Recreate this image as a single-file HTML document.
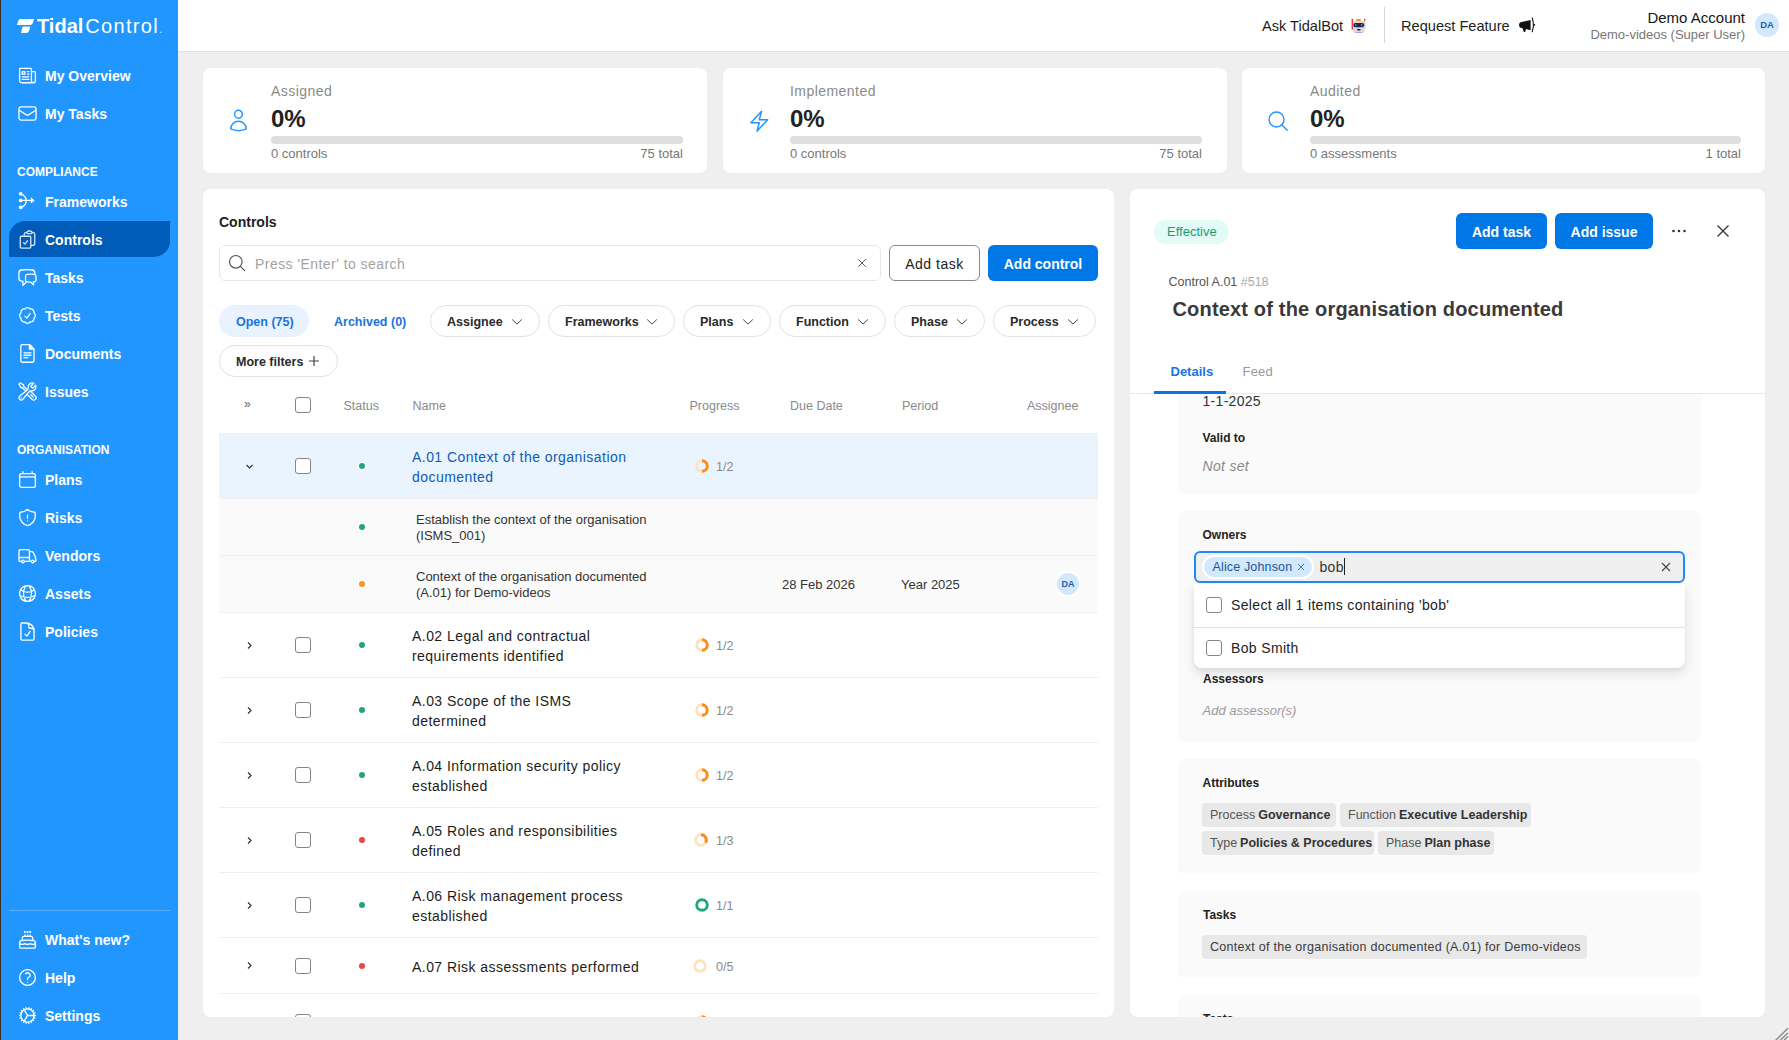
<!DOCTYPE html>
<html><head><meta charset="utf-8">
<style>
*{box-sizing:border-box;margin:0;padding:0}
html,body{width:1789px;height:1040px;overflow:hidden}
body{font-family:"Liberation Sans",sans-serif;background:#efefef;color:#222;position:relative}
.abs{position:absolute}
#side{position:absolute;left:0;top:0;width:178px;height:1040px;background:#2196ff;color:#fff}
#side .edge{position:absolute;left:0;top:0;width:1px;height:1040px;background:#3a2a22}
.logo{color:#fff;white-space:nowrap;line-height:24px}
.logo b{font-size:20px;font-weight:bold;letter-spacing:0}
.logo span{font-size:20px;letter-spacing:1.3px;margin-left:2px}
.logo i{font-style:normal;font-size:12px;opacity:.7}
.nav{position:absolute;left:45px;height:20px;line-height:20px;font-size:14px;font-weight:bold;white-space:nowrap}
.nav svg{position:absolute;left:-28.5px;top:-1.5px;width:21px;height:21px;fill:none;stroke:#fff;stroke-width:1.5;stroke-linecap:round;stroke-linejoin:round}
.nav svg.ci{stroke:#d5e4f3}
.sec{position:absolute;left:17px;height:20px;line-height:20px;font-size:12px;font-weight:bold}
.act{position:absolute;left:9px;top:221px;width:161px;height:36px;background:#005cb8;border-radius:16px 0 16px 0}
#hdr{position:absolute;left:178px;top:0;width:1611px;height:52px;background:#fff;border-bottom:1px solid #e0e0e0}
.card{position:absolute;background:#fff;border-radius:8px}
.htxt{font-size:14.6px;line-height:20px;color:#1e1e1e;white-space:nowrap}
.sic{fill:none;stroke:#2196ff;stroke-width:1.4;stroke-linecap:round;stroke-linejoin:round}
.stat{position:absolute;top:81px}
.st{height:20px;line-height:20px;font-size:14px;letter-spacing:.45px;color:#8a8a8a}
.sv{height:28px;line-height:28px;font-size:24px;font-weight:bold;color:#222;margin-top:4px}
.sb{height:8px;border-radius:4px;background:#dedede;margin-top:3px}
.sf{display:flex;justify-content:space-between;font-size:13px;line-height:16px;color:#777;margin-top:2px}
.btnw{border:1px solid #8a8a8a;border-radius:6px;background:#fff;font-size:14px;letter-spacing:.5px;line-height:34px;padding-top:1px;text-align:center;color:#222}
.btnb{border-radius:6px;background:#0077e6;font-size:14px;font-weight:bold;line-height:34px;padding-top:2px;text-align:center;color:#fff}
.pill{height:32px;border-radius:16px;font-size:12.5px;font-weight:bold;line-height:32px;padding-top:1px;padding-left:17px;white-space:nowrap}
.psel{background:#e8f3ff;color:#1a73d9}
.plink{color:#1a73d9;padding-left:16px}
.pdd{border:1px solid #e3e3e3;color:#2a2a2a;line-height:30px;padding-top:1px;padding-left:16px}
.chev{position:absolute;top:12px}
.cb{width:16px;height:16px;border:1.2px solid #858585;border-radius:3px;background:#fff}
.th{font-size:12.5px;line-height:18px;color:#8a8a8a;white-space:nowrap}
.dot{width:6px;height:6px;border-radius:3px;box-shadow:0 0 0 1.5px #fff}
.rname{font-size:14px;letter-spacing:.45px;line-height:20px;color:#1c1c1c;white-space:nowrap}
.sname{font-size:13px;line-height:16px;color:#333;white-space:nowrap}
.prg{font-size:12.5px;line-height:18px;color:#8a8a8a}
.av{width:26px;height:26px;border-radius:13px;background:#d3e8fc;border:2px solid #fff;color:#1f5fa8;font-size:9px;font-weight:bold;line-height:22px;text-align:center}
.pbox{background:#fafafa;border-radius:8px}
.ptxt{font-size:14px;letter-spacing:.3px;line-height:20px;color:#333;white-space:nowrap}
.plab{font-size:12px;font-weight:bold;line-height:18px;color:#222;white-space:nowrap}
.pit{font-size:14px;font-style:italic;letter-spacing:.3px;line-height:20px;color:#8a8a8a}
.pit2{font-size:13px;font-style:italic;line-height:20px;color:#9a9a9a;white-space:nowrap}
.chip{height:20px;width:108px;border-radius:10px;background:#d2e8fd;box-shadow:0 0 0 2px #fff;color:#1b5597;font-size:12.5px;letter-spacing:.15px;line-height:20px;padding-left:9px;white-space:nowrap}
.dtxt{font-size:14px;letter-spacing:.35px;line-height:20px;color:#222;white-space:nowrap}
.tag{height:23.5px;border-radius:4px;background:#e8e8e8;color:#555;font-size:12.5px;line-height:23.5px;padding-top:1px;padding-left:8px;white-space:nowrap}
.tag b{color:#333;margin-left:3px}

</style></head>
<body>
<div id="side"><div class="edge"></div>
<svg class="abs" style="left:16px;top:18px" width="19" height="16" viewBox="0 0 19 16"><path d="M4.5 1H18L17 4.5C16.3 6.5 15.3 7 13.5 7H1L2 3.6C2.6 1.7 3.2 1 4.5 1Z M7.3 8.5H14.2L13.5 11.5C12.8 14 12 15 10 15H5L5.7 12C6.2 9.5 6.5 8.5 7.3 8.5Z" fill="#fff"/></svg>
<div class="abs logo" style="left:37px;top:14px"><b>Tidal</b><span>Control</span><i>.</i></div>
<div class="nav" style="top:66px"><svg viewBox="0 0 24 24"><path d="M12 7.5h1.5m-1.5 3h1.5m-7.5 3h7.5m-7.5 3h7.5m3-9h3.375c.621 0 1.125.504 1.125 1.125V18a2.25 2.25 0 0 1-2.25 2.25M16.5 7.5V18a2.25 2.25 0 0 0 2.25 2.25M16.5 7.5V4.875c0-.621-.504-1.125-1.125-1.125H4.125C3.504 3.75 3 4.254 3 4.875V18a2.25 2.25 0 0 0 2.25 2.25h13.5M6 7.5h3v3H6v-3Z"/></svg>My Overview</div>
<div class="nav" style="top:104px"><svg viewBox="0 0 24 24"><path d="M21.75 6.75v10.5a2.25 2.25 0 0 1-2.25 2.25h-15a2.25 2.25 0 0 1-2.25-2.25V6.75m19.5 0A2.25 2.25 0 0 0 19.5 4.5h-15a2.25 2.25 0 0 0-2.25 2.25m19.5 0v.243a2.25 2.25 0 0 1-1.07 1.916l-7.5 4.615a2.25 2.25 0 0 1-2.36 0L3.32 8.91a2.25 2.25 0 0 1-1.07-1.916V6.75"/></svg>My Tasks</div>
<div class="sec" style="top:161.5px">COMPLIANCE</div>
<div class="nav" style="top:192px"><svg viewBox="0 0 24 24"><circle cx="4.2" cy="3.2" r="2.1" fill="#fff" stroke="none"/><circle cx="4.2" cy="10.8" r="2.1" fill="#fff" stroke="none"/><circle cx="4.2" cy="18.8" r="2.1" fill="#fff" stroke="none"/><path d="M4.2 3.2C9 5 10.6 8 10.6 11S9 17 4.2 18.8M4.2 10.8H16.5"/><path d="M15.8 7.2L20.2 10.8L15.8 14.4Z" fill="#fff" stroke="none"/></svg>Frameworks</div>
<div class="act"></div>
<div class="nav" style="top:230px"><svg viewBox="0 0 24 24" class=ci><path d="M11.35 3.836c-.065.21-.1.433-.1.664 0 .414.336.75.75.75h4.5a.75.75 0 0 0 .75-.75 2.25 2.25 0 0 0-.1-.664m-5.8 0A2.251 2.251 0 0 1 13.5 2.25H15c1.012 0 1.867.668 2.15 1.586m-5.8 0c-.376.023-.75.05-1.124.08C9.095 4.01 8.25 4.973 8.25 6.108V8.25m8.9-4.414c.376.023.75.05 1.124.08 1.131.094 1.976 1.057 1.976 2.192V16.5A2.25 2.25 0 0 1 18 18.75h-2.25m-7.5-10.5H4.875c-.621 0-1.125.504-1.125 1.125v11.25c0 .621.504 1.125 1.125 1.125h9.75c.621 0 1.125-.504 1.125-1.125V18.75m-7.5-10.5h6.375c.621 0 1.125.504 1.125 1.125v9.375m-8.25-3 1.5 1.5 3-3.75"/></svg>Controls</div>
<div class="nav" style="top:268px"><svg viewBox="0 0 24 24"><path d="M20.25 8.511c.884.284 1.5 1.128 1.5 2.097v4.286c0 1.136-.847 2.1-1.98 2.193-.34.027-.68.052-1.02.072v3.091l-3-3c-1.354 0-2.694-.055-4.02-.163a2.115 2.115 0 0 1-.825-.242m9.345-8.334a2.126 2.126 0 0 0-.476-.095 48.64 48.64 0 0 0-8.048 0c-1.131.094-1.976 1.057-1.976 2.192v4.286c0 .837.46 1.58 1.155 1.951m9.345-8.334V6.637c0-1.621-1.152-3.026-2.76-3.235A48.455 48.455 0 0 0 11.25 3c-2.115 0-4.198.137-6.24.402-1.608.209-2.76 1.614-2.76 3.235v6.226c0 1.621 1.152 3.026 2.76 3.235.577.075 1.157.14 1.74.194V21l4.155-4.155"/></svg>Tasks</div>
<div class="nav" style="top:306px"><svg viewBox="0 0 24 24"><path d="M9 12.75 11.25 15 15 9.75M21 12c0 1.268-.63 2.39-1.593 3.068a3.745 3.745 0 0 1-1.043 3.296 3.745 3.745 0 0 1-3.296 1.043A3.745 3.745 0 0 1 12 21c-1.268 0-2.39-.63-3.068-1.593a3.746 3.746 0 0 1-3.296-1.043 3.745 3.745 0 0 1-1.043-3.296A3.745 3.745 0 0 1 3 12c0-1.268.63-2.39 1.593-3.068a3.745 3.745 0 0 1 1.043-3.296 3.746 3.746 0 0 1 3.296-1.043A3.746 3.746 0 0 1 12 3c1.268 0 2.39.63 3.068 1.593a3.746 3.746 0 0 1 3.296 1.043 3.746 3.746 0 0 1 1.043 3.296A3.745 3.745 0 0 1 21 12Z"/></svg>Tests</div>
<div class="nav" style="top:344px"><svg viewBox="0 0 24 24"><path d="M6 1.8h8.2l5.2 5.2v13.4a1.6 1.6 0 0 1-1.6 1.6H6a1.6 1.6 0 0 1-1.6-1.6V3.4A1.6 1.6 0 0 1 6 1.8Z"/><path d="M14.2 1.8V7h5.2Z" fill="#fff"/><path d="M8 11.2h8M8 14h8M8 16.8h4.5"/></svg>Documents</div>
<div class="nav" style="top:382px"><svg viewBox="0 0 24 24"><path d="M11.42 15.17 17.25 21A2.652 2.652 0 0 0 21 17.25l-5.877-5.877M11.42 15.17l2.496-3.03c.317-.384.74-.626 1.208-.766M11.42 15.17l-4.655 5.653a2.548 2.548 0 1 1-3.586-3.586l6.837-5.63m5.108-.233c.55-.164 1.163-.188 1.743-.14a4.5 4.5 0 0 0 4.486-6.336l-3.276 3.277a3.004 3.004 0 0 1-2.25-2.25l3.276-3.276a4.5 4.5 0 0 0-6.336 4.486c.091 1.076-.071 2.264-.904 2.95l-.102.085m-1.745 1.437L5.909 7.5H4.5L2.25 3.75l1.5-1.5L7.5 4.5v1.409l4.26 4.26m-1.745 1.437 1.745-1.437m6.615 8.206L15.75 15.75M4.867 19.125h.008v.008h-.008v-.008Z"/></svg>Issues</div>
<div class="sec" style="top:439.5px">ORGANISATION</div>
<div class="nav" style="top:470px"><svg viewBox="0 0 24 24"><path d="M6.75 3v2.25M17.25 3v2.25M3 18.75V7.5a2.25 2.25 0 0 1 2.25-2.25h13.5A2.25 2.25 0 0 1 21 7.5v11.25m-18 0A2.25 2.25 0 0 0 5.25 21h13.5A2.25 2.25 0 0 0 21 18.75m-18 0v-7.5A2.25 2.25 0 0 1 5.25 9h13.5A2.25 2.25 0 0 1 21 11.25v7.5"/></svg>Plans</div>
<div class="nav" style="top:508px"><svg viewBox="0 0 24 24"><path d="M12 9v3.75m0-10.036A11.959 11.959 0 0 1 3.598 6 11.99 11.99 0 0 0 3 9.75c0 5.592 3.824 10.29 9 11.622 5.176-1.332 9-6.03 9-11.622 0-1.310-.21-2.57-.598-3.75h-.152c-3.196 0-6.1-1.25-8.25-3.286Zm0 13.036h.008v.008H12v-.008Z"/></svg>Risks</div>
<div class="nav" style="top:546px"><svg viewBox="0 0 24 24"><path d="M8.25 18.75a1.5 1.5 0 0 1-3 0m3 0a1.5 1.5 0 0 0-3 0m3 0h6m-9 0H3.375a1.125 1.125 0 0 1-1.125-1.125V14.25m17.25 4.5a1.5 1.5 0 0 1-3 0m3 0a1.5 1.5 0 0 0-3 0m3 0h1.125c.621 0 1.129-.504 1.090-1.124a17.902 17.902 0 0 0-3.213-9.193 2.056 2.056 0 0 0-1.58-.86H14.25M16.5 18.75h-2.25m0-11.177v-.958c0-.568-.422-1.048-.987-1.106a48.554 48.554 0 0 0-10.026 0 1.106 1.106 0 0 0-.987 1.106v7.635m12-6.677v6.677m0 4.5v-4.5m0 0h-12"/></svg>Vendors</div>
<div class="nav" style="top:584px"><svg viewBox="0 0 24 24"><path d="M12 21a9.004 9.004 0 0 0 8.716-6.747M12 21a9.004 9.004 0 0 1-8.716-6.747M12 21c2.485 0 4.5-4.03 4.5-9S14.485 3 12 3m0 18c-2.485 0-4.5-4.03-4.5-9S9.515 3 12 3m0 0a8.997 8.997 0 0 1 7.843 4.582M12 3a8.997 8.997 0 0 0-7.843 4.582m15.686 0A11.953 11.953 0 0 1 12 10.5c-2.998 0-5.74-1.1-7.843-2.918m15.686 0A8.959 8.959 0 0 1 21 12c0 .778-.099 1.533-.284 2.253m0 0A17.919 17.919 0 0 1 12 16.5c-3.162 0-6.133-.815-8.716-2.247m0 0A9.015 9.015 0 0 1 3 12c0-1.605.42-3.113 1.157-4.418"/></svg>Assets</div>
<div class="nav" style="top:622px"><svg viewBox="0 0 24 24"><path d="M10.125 2.25h-4.5c-.621 0-1.125.504-1.125 1.125v17.25c0 .621.504 1.125 1.125 1.125h12.75c.621 0 1.125-.504 1.125-1.125v-9M10.125 2.25h.375a9 9 0 0 1 9 9v.375M10.125 2.25A3.375 3.375 0 0 1 13.5 5.625v1.5c0 .621.504 1.125 1.125 1.125h1.5a3.375 3.375 0 0 1 3.375 3.375M9 15l2.25 2.25L15 12"/></svg>Policies</div>
<div class="nav" style="top:930px"><svg viewBox="0 0 24 24"><path d="M12 8.25v-1.5m0 1.5c-1.355 0-2.697.056-4.024.166C6.845 8.51 6 9.473 6 10.608v2.513m6-4.871c1.355 0 2.697.056 4.024.166C17.155 8.51 18 9.473 18 10.608v2.513M15 8.25v-1.5m-6 1.5v-1.5m12 9.75-1.5.75a3.354 3.354 0 0 1-3 0 3.354 3.354 0 0 0-3 0 3.354 3.354 0 0 1-3 0 3.354 3.354 0 0 0-3 0 3.354 3.354 0 0 1-3 0L3 16.5m15-3.379a48.474 48.474 0 0 0-6-.371c-2.032 0-4.034.126-6 .371m12 0c.39.049.777.102 1.163.16 1.070.16 1.837 1.094 1.837 2.175v5.169c0 .621-.504 1.125-1.125 1.125H4.125A1.125 1.125 0 0 1 3 20.625v-5.17c0-1.080.768-2.014 1.837-2.174A47.78 47.78 0 0 1 6 13.12M12.265 3.11a.375.375 0 1 1-.53 0L12 2.845l.265.265Zm-3 0a.375.375 0 1 1-.53 0L9 2.845l.265.265Zm6 0a.375.375 0 1 1-.53 0L15 2.845l.265.265Z"/></svg>What's new?</div>
<div class="nav" style="top:968px"><svg viewBox="0 0 24 24"><path d="M9.879 7.519c1.171-1.025 3.071-1.025 4.242 0 1.172 1.025 1.172 2.687 0 3.712-.203.179-.43.326-.67.442-.745.361-1.450.999-1.450 1.827v.75M21 12a9 9 0 1 1-18 0 9 9 0 0 1 18 0Zm-9 5.25h.008v.008H12v-.008Z"/></svg>Help</div>
<div class="nav" style="top:1006px"><svg viewBox="0 0 24 24"><path d="M4.5 12a7.5 7.5 0 0 0 15 0m-15 0a7.5 7.5 0 1 1 15 0m-15 0H3m16.5 0H21m-1.5 0H12m-8.457 3.077 1.41-.513m14.095-5.13 1.41-.513M5.106 17.785l1.15-.964m11.49-9.642 1.149-.964M7.501 19.795l.75-1.3m7.5-12.99.75-1.3m-6.063 16.658.26-1.477m2.605-14.772.26-1.477m0 17.726-.26-1.477M10.698 4.614l-.26-1.477M16.5 19.794l-.75-1.299M7.5 4.205 12 12m6.894 5.785-1.149-.964M6.256 7.178l-1.15-.964m15.352 8.864-1.410-.513M4.954 9.435l-1.41-.514M12.002 12l-3.75 6.495"/></svg>Settings</div>
<div class="abs" style="left:9px;top:910px;width:161px;height:1px;background:rgba(255,255,255,.25)"></div>
</div>
<div id="hdr"></div>
<div class="abs htxt" style="left:1262px;top:16px">Ask TidalBot</div>
<svg class="abs" style="left:1345px;top:12px" width="30" height="26" viewBox="0 0 30 26"><rect x="6.6" y="6.8" width="1.5" height="11" rx=".7" fill="#e8384a"/><rect x="18.9" y="6.8" width="1.5" height="10" rx=".7" fill="#dcc49a"/><rect x="18.9" y="6.8" width="1.5" height="1.8" rx=".7" fill="#e8384a"/><rect x="11" y="7" width="5" height="2" rx="1" fill="#f7931e"/><rect x="8" y="9" width="11.5" height="12" rx="2" fill="#dadada"/><rect x="8.4" y="11" width="10.7" height="4.3" rx="2" fill="#23234a"/><ellipse cx="10.8" cy="13.1" rx=".9" ry="1.1" fill="#3a86e8"/><ellipse cx="16.6" cy="13.1" rx=".9" ry="1.1" fill="#19a0f5"/><rect x="12" y="17" width="3.6" height="1.6" rx=".8" fill="#1d1d6b"/><rect x="10.5" y="20" width="6.5" height="1" fill="#a3a3ff"/></svg>
<div class="abs" style="left:1384px;top:7px;width:1px;height:36px;background:#d6d6d6"></div>
<div class="abs htxt" style="left:1401px;top:16px">Request Feature</div>
<svg class="abs" style="left:1512px;top:12px" width="30" height="26" viewBox="0 0 30 26"><path d="M8.5 10.3Q7 10.8 7 13Q7 15.2 8.5 15.7L18.6 18.2V8Z" fill="#111"/><path d="M10.3 15.2L11.6 19.6Q12.4 20.6 13.3 19.6L14.2 16.2Z" fill="#111"/><path d="M20.2 6Q22.6 12.8 20.2 19.8" fill="none" stroke="#111" stroke-width="1.1" stroke-linecap="round"/><circle cx="22.3" cy="12.8" r=".9" fill="#111"/></svg>
<div class="abs" style="left:1545px;top:9px;width:200px;text-align:right;font-size:15px;line-height:18px;color:#151515">Demo Account</div>
<div class="abs" style="left:1545px;top:27px;width:200px;text-align:right;font-size:13px;line-height:16px;color:#777">Demo-videos (Super User)</div>
<div class="abs" style="left:1755px;top:13px;width:24px;height:24px;border-radius:12px;background:#d3e8fc;color:#1f5fa8;font-size:9.5px;font-weight:bold;line-height:24px;text-align:center">DA</div>
<div class="card" style="left:203px;top:68px;width:504px;height:105px"></div>
<div class="card" style="left:723px;top:68px;width:504px;height:105px"></div>
<div class="card" style="left:1242px;top:68px;width:523px;height:105px"></div>
<svg class="abs sic" style="left:226px;top:108px" width="25" height="25" viewBox="0 0 24 24"><path d="M15.75 6a3.75 3.75 0 11-7.5 0 3.75 3.75 0 017.5 0zM4.501 20.118a7.5 7.5 0 0114.998 0A17.933 17.933 0 0112 21.75c-2.676 0-5.216-.584-7.499-1.632z"/></svg>
<svg class="abs sic" style="left:746.5px;top:108.5px" width="24.5" height="24.5" viewBox="0 0 24 24"><path d="M3.75 13.5l10.5-11.25L12 10.5h8.25L9.75 21.75 12 13.5H3.75z"/></svg>
<svg class="abs sic" style="left:1266px;top:109px" width="24" height="24" viewBox="0 0 24 24"><circle cx="10.5" cy="10.5" r="7.5"/><path d="M16 16l5.2 5.2"/></svg>
<div class="stat" style="left:271px;width:412px"><div class="st">Assigned</div><div class="sv">0%</div><div class="sb"></div><div class="sf"><span>0 controls</span><span>75 total</span></div></div>
<div class="stat" style="left:790px;width:412px"><div class="st">Implemented</div><div class="sv">0%</div><div class="sb"></div><div class="sf"><span>0 controls</span><span>75 total</span></div></div>
<div class="stat" style="left:1310px;width:431px"><div class="st">Audited</div><div class="sv">0%</div><div class="sb"></div><div class="sf"><span>0 assessments</span><span>1 total</span></div></div>
<div class="card" style="left:203px;top:189px;width:911px;height:828px;overflow:hidden">
<div class="abs" style="left:16px;top:23px;font-size:14px;font-weight:bold;line-height:20px;color:#1e1e1e">Controls</div>
<div class="abs" style="left:16px;top:56px;width:662px;height:36px;border:1px solid #e6e6e6;border-radius:6px"></div>
<svg class="abs" style="left:24px;top:64px" width="20" height="20" viewBox="0 0 20 20"><circle cx="8.8" cy="8.8" r="6.3" fill="none" stroke="#555" stroke-width="1.2"/><path d="M13.3 13.3l4.3 4.3" stroke="#555" stroke-width="1.2" stroke-linecap="round"/></svg>
<div class="abs" style="left:52px;top:65px;font-size:14px;letter-spacing:.45px;line-height:20px;color:#a3a3a3;white-space:nowrap">Press 'Enter' to search</div>
<svg class="abs" style="left:654px;top:69px" width="10" height="10" viewBox="0 0 10 10"><path d="M1.2 1.2l7.6 7.6M8.8 1.2l-7.6 7.6" stroke="#555" stroke-width=".95"/></svg>
<div class="abs btnw" style="left:686px;top:56px;width:91px;height:36px">Add task</div>
<div class="abs btnb" style="left:785px;top:56px;width:110px;height:36px">Add control</div>
<div class="abs pill psel" style="left:16px;top:116px;width:90px">Open (75)</div>
<div class="abs pill plink" style="left:115px;top:116px;width:103px">Archived (0)</div>
<div class="abs pill pdd" style="left:227px;top:116px;width:110px">Assignee<svg class="chev" style="left:80px" width="12" height="8" viewBox="0 0 12 8"><path d="M1.2 1.5l4.8 4.6l4.8 -4.6" fill="none" stroke="#444" stroke-width="1"/></svg></div>
<div class="abs pill pdd" style="left:345px;top:116px;width:127px">Frameworks<svg class="chev" style="left:97px" width="12" height="8" viewBox="0 0 12 8"><path d="M1.2 1.5l4.8 4.6l4.8 -4.6" fill="none" stroke="#444" stroke-width="1"/></svg></div>
<div class="abs pill pdd" style="left:480px;top:116px;width:88px">Plans<svg class="chev" style="left:58px" width="12" height="8" viewBox="0 0 12 8"><path d="M1.2 1.5l4.8 4.6l4.8 -4.6" fill="none" stroke="#444" stroke-width="1"/></svg></div>
<div class="abs pill pdd" style="left:576px;top:116px;width:107px">Function<svg class="chev" style="left:77px" width="12" height="8" viewBox="0 0 12 8"><path d="M1.2 1.5l4.8 4.6l4.8 -4.6" fill="none" stroke="#444" stroke-width="1"/></svg></div>
<div class="abs pill pdd" style="left:691px;top:116px;width:91px">Phase<svg class="chev" style="left:61px" width="12" height="8" viewBox="0 0 12 8"><path d="M1.2 1.5l4.8 4.6l4.8 -4.6" fill="none" stroke="#444" stroke-width="1"/></svg></div>
<div class="abs pill pdd" style="left:790px;top:116px;width:103px">Process<svg class="chev" style="left:73px" width="12" height="8" viewBox="0 0 12 8"><path d="M1.2 1.5l4.8 4.6l4.8 -4.6" fill="none" stroke="#444" stroke-width="1"/></svg></div>
<div class="abs pill pdd" style="left:16px;top:156px;width:119px">More filters<svg class="chev" style="left:88px;top:9px" width="12" height="12" viewBox="0 0 12 12"><path d="M6 1v10M1 6h10" fill="none" stroke="#444" stroke-width="1.2"/></svg></div>
<div class="abs" style="left:41px;top:207px;font-size:12px;line-height:16px;color:#666">&raquo;</div>
<div class="abs cb" style="left:92px;top:208px"></div>
<div class="abs th" style="left:140.5px;top:208px">Status</div>
<div class="abs th" style="left:209.5px;top:208px">Name</div>
<div class="abs th" style="left:486.5px;top:208px">Progress</div>
<div class="abs th" style="left:587px;top:208px">Due Date</div>
<div class="abs th" style="left:699px;top:208px">Period</div>
<div class="abs th" style="left:824px;top:208px">Assignee</div>
<div class="abs" style="left:16px;top:244px;width:879px;height:1px;background:#efefef"></div>
<div class="abs" style="left:16px;top:245px;width:879px;height:65px;background:#eaf4ff;border-bottom:1px solid #efefef"></div>
<svg class="abs" style="left:42px;top:274px" width="9" height="7" viewBox="0 0 9 7"><path d="M1.5 2l3 3l3 -3" fill="none" stroke="#333" stroke-width="1.2"/></svg>
<div class="abs cb" style="left:92px;top:269px"></div>
<div class="abs dot" style="left:156px;top:274px;background:#1fa67a"></div>
<div class="abs rname" style="left:209px;top:258px;color:#0f5bb5">A.01 Context of the organisation<br>documented</div>
<svg class="abs" style="left:491px;top:269px" width="16" height="16"><circle cx="8" cy="8" r="5.3" fill="none" stroke="#fde3bd" stroke-width="2.9"/><path d="M8 2.7 A5.3 5.3 0 0 1 8.00 13.30" fill="none" stroke="#fb8c1e" stroke-width="2.9"/></svg>
<div class="abs prg" style="left:513px;top:269px">1/2</div>
<div class="abs" style="left:16px;top:310px;width:879px;height:57px;background:#fafafa;border-bottom:1px solid #efefef"></div>
<div class="abs dot" style="left:156px;top:335px;background:#1fa67a"></div>
<div class="abs sname" style="left:213px;top:323px">Establish the context of the organisation<br>(ISMS_001)</div>
<div class="abs" style="left:16px;top:367px;width:879px;height:57px;background:#fafafa;border-bottom:1px solid #efefef"></div>
<div class="abs dot" style="left:156px;top:392px;background:#f7931e"></div>
<div class="abs sname" style="left:213px;top:380px">Context of the organisation documented<br>(A.01) for Demo-videos</div>
<div class="abs sname" style="left:579px;top:388px">28 Feb 2026</div>
<div class="abs sname" style="left:698px;top:388px">Year 2025</div>
<div class="abs av" style="left:852px;top:382px">DA</div>
<div class="abs" style="left:16px;top:488px;width:879px;height:1px;background:#efefef"></div>
<svg class="abs" style="left:43px;top:451.5px" width="7" height="9" viewBox="0 0 7 9"><path d="M2 1.5l3 3l-3 3" fill="none" stroke="#333" stroke-width="1.2"/></svg>
<div class="abs cb" style="left:92px;top:448.0px"></div>
<div class="abs dot" style="left:156px;top:453.0px;background:#1fa67a"></div>
<div class="abs rname" style="left:209px;top:437.0px">A.02 Legal and contractual<br>requirements identified</div>
<svg class="abs" style="left:491px;top:448.0px" width="16" height="16"><circle cx="8" cy="8" r="5.3" fill="none" stroke="#fde3bd" stroke-width="2.9"/><path d="M8 2.7 A5.3 5.3 0 0 1 8.00 13.30" fill="none" stroke="#fb8c1e" stroke-width="2.9"/></svg>
<div class="abs prg" style="left:513px;top:448.0px">1/2</div>
<div class="abs" style="left:16px;top:553px;width:879px;height:1px;background:#efefef"></div>
<svg class="abs" style="left:43px;top:516.5px" width="7" height="9" viewBox="0 0 7 9"><path d="M2 1.5l3 3l-3 3" fill="none" stroke="#333" stroke-width="1.2"/></svg>
<div class="abs cb" style="left:92px;top:513.0px"></div>
<div class="abs dot" style="left:156px;top:518.0px;background:#1fa67a"></div>
<div class="abs rname" style="left:209px;top:502.0px">A.03 Scope of the ISMS<br>determined</div>
<svg class="abs" style="left:491px;top:513.0px" width="16" height="16"><circle cx="8" cy="8" r="5.3" fill="none" stroke="#fde3bd" stroke-width="2.9"/><path d="M8 2.7 A5.3 5.3 0 0 1 8.00 13.30" fill="none" stroke="#fb8c1e" stroke-width="2.9"/></svg>
<div class="abs prg" style="left:513px;top:513.0px">1/2</div>
<div class="abs" style="left:16px;top:618px;width:879px;height:1px;background:#efefef"></div>
<svg class="abs" style="left:43px;top:581.5px" width="7" height="9" viewBox="0 0 7 9"><path d="M2 1.5l3 3l-3 3" fill="none" stroke="#333" stroke-width="1.2"/></svg>
<div class="abs cb" style="left:92px;top:578.0px"></div>
<div class="abs dot" style="left:156px;top:583.0px;background:#1fa67a"></div>
<div class="abs rname" style="left:209px;top:567.0px">A.04 Information security policy<br>established</div>
<svg class="abs" style="left:491px;top:578.0px" width="16" height="16"><circle cx="8" cy="8" r="5.3" fill="none" stroke="#fde3bd" stroke-width="2.9"/><path d="M8 2.7 A5.3 5.3 0 0 1 8.00 13.30" fill="none" stroke="#fb8c1e" stroke-width="2.9"/></svg>
<div class="abs prg" style="left:513px;top:578.0px">1/2</div>
<div class="abs" style="left:16px;top:683px;width:879px;height:1px;background:#efefef"></div>
<svg class="abs" style="left:43px;top:646.5px" width="7" height="9" viewBox="0 0 7 9"><path d="M2 1.5l3 3l-3 3" fill="none" stroke="#333" stroke-width="1.2"/></svg>
<div class="abs cb" style="left:92px;top:643.0px"></div>
<div class="abs dot" style="left:156px;top:648.0px;background:#e5483f"></div>
<div class="abs rname" style="left:209px;top:632.0px">A.05 Roles and responsibilities<br>defined</div>
<svg class="abs" style="left:490px;top:643.0px" width="16" height="16"><circle cx="8" cy="8" r="5.3" fill="none" stroke="#fde3bd" stroke-width="2.9"/><path d="M8 2.7 A5.3 5.3 0 0 1 12.59 10.65" fill="none" stroke="#fb8c1e" stroke-width="2.9"/></svg>
<div class="abs prg" style="left:513px;top:643.0px">1/3</div>
<div class="abs" style="left:16px;top:748px;width:879px;height:1px;background:#efefef"></div>
<svg class="abs" style="left:43px;top:711.5px" width="7" height="9" viewBox="0 0 7 9"><path d="M2 1.5l3 3l-3 3" fill="none" stroke="#333" stroke-width="1.2"/></svg>
<div class="abs cb" style="left:92px;top:708.0px"></div>
<div class="abs dot" style="left:156px;top:713.0px;background:#1fa67a"></div>
<div class="abs rname" style="left:209px;top:697.0px">A.06 Risk management process<br>established</div>
<svg class="abs" style="left:491px;top:708.0px" width="16" height="16"><circle cx="8" cy="8" r="5.3" fill="none" stroke="#1fa67a" stroke-width="2.9"/></svg>
<div class="abs prg" style="left:513px;top:708.0px">1/1</div>
<div class="abs" style="left:16px;top:804px;width:879px;height:1px;background:#efefef"></div>
<svg class="abs" style="left:43px;top:772.0px" width="7" height="9" viewBox="0 0 7 9"><path d="M2 1.5l3 3l-3 3" fill="none" stroke="#333" stroke-width="1.2"/></svg>
<div class="abs cb" style="left:92px;top:768.5px"></div>
<div class="abs dot" style="left:156px;top:773.5px;background:#e5483f"></div>
<div class="abs rname" style="left:209px;top:767.5px">A.07 Risk assessments performed</div>
<svg class="abs" style="left:488.5px;top:768.5px" width="16" height="16"><circle cx="8" cy="8" r="5.3" fill="none" stroke="#fde3bd" stroke-width="2.9"/></svg>
<div class="abs prg" style="left:513px;top:768.5px">0/5</div>
<div class="abs" style="left:16px;top:860px;width:879px;height:1px;background:#efefef"></div>
<svg class="abs" style="left:43px;top:828.0px" width="7" height="9" viewBox="0 0 7 9"><path d="M2 1.5l3 3l-3 3" fill="none" stroke="#333" stroke-width="1.2"/></svg>
<div class="abs cb" style="left:92px;top:824.5px"></div>
<div class="abs dot" style="left:156px;top:829.5px;background:#1fa67a"></div>
<div class="abs rname" style="left:209px;top:823.5px">A.08 Risk treatment defined</div>
<svg class="abs" style="left:491px;top:824.5px" width="16" height="16"><circle cx="8" cy="8" r="5.3" fill="none" stroke="#fde3bd" stroke-width="2.9"/><path d="M8 2.7 A5.3 5.3 0 0 1 8.00 13.30" fill="none" stroke="#fb8c1e" stroke-width="2.9"/></svg>
<div class="abs prg" style="left:513px;top:824.5px">1/2</div>
</div>
<div class="card" style="left:1130px;top:189px;width:635px;height:828px;overflow:hidden">
<div class="abs" style="left:0px;top:205px;width:635px;height:623px;overflow:hidden">
<div class="abs pbox" style="left:48px;top:-94px;width:523px;height:194px"></div>
<div class="abs ptxt" style="left:72.5px;top:-3px">1-1-2025</div>
<div class="abs plab" style="left:72.5px;top:35px">Valid to</div>
<div class="abs pit" style="left:72.5px;top:62px">Not set</div>
<div class="abs pbox" style="left:48px;top:117px;width:523px;height:231px"></div>
<div class="abs plab" style="left:72.5px;top:132px">Owners</div>
<div class="abs" style="left:64px;top:157px;width:491px;height:32px;border:2px solid #1e88ff;border-radius:6px;background:#efefef"></div>
<div class="abs chip" style="left:73.5px;top:162.5px">Alice Johnson<svg style="position:absolute;left:93px;top:6px" width="8" height="8" viewBox="0 0 8 8"><path d="M1 1l6 6M7 1l-6 6" stroke="#4a78b0" stroke-width="1"/></svg></div>
<div class="abs ptxt" style="left:189.5px;top:163px">bob</div>
<div class="abs" style="left:214px;top:164px;width:1px;height:17px;background:#222"></div>
<svg class="abs" style="left:531px;top:168px" width="10" height="10" viewBox="0 0 10 10"><path d="M1 1l8 8M9 1l-8 8" stroke="#444" stroke-width="1.1"/></svg>
<div class="abs plab" style="left:73px;top:276px">Assessors</div>
<div class="abs pit2" style="left:72.5px;top:307px">Add assessor(s)</div>
<div class="abs" style="left:64px;top:190px;width:491px;height:84px;background:#fff;border-radius:0 0 8px 8px;box-shadow:0 6px 12px rgba(0,0,0,.10),0 2px 4px rgba(0,0,0,.05)"></div>
<div class="abs cb" style="left:76px;top:203px"></div>
<div class="abs dtxt" style="left:101px;top:201px">Select all 1 items containing 'bob'</div>
<div class="abs" style="left:64px;top:233px;width:491px;height:1px;background:#e2e2e2"></div>
<div class="abs cb" style="left:76px;top:246px"></div>
<div class="abs dtxt" style="left:101px;top:244px">Bob Smith</div>
<div class="abs pbox" style="left:48px;top:365px;width:523px;height:115px"></div>
<div class="abs plab" style="left:72.5px;top:380px">Attributes</div>
<div class="abs tag" style="left:72px;top:409px;width:134px">Process<b>Governance</b></div>
<div class="abs tag" style="left:210px;top:409px;width:191px">Function<b>Executive Leadership</b></div>
<div class="abs tag" style="left:72px;top:437px;width:172px">Type<b>Policies &amp; Procedures</b></div>
<div class="abs tag" style="left:248px;top:437px;width:116px">Phase<b>Plan phase</b></div>
<div class="abs pbox" style="left:48px;top:497px;width:523px;height:87px"></div>
<div class="abs plab" style="left:73px;top:512px">Tasks</div>
<div class="abs tag" style="left:72px;top:541px;width:385px;letter-spacing:.27px;color:#3a3a3a">Context of the organisation documented (A.01) for Demo-videos</div>
<div class="abs pbox" style="left:48px;top:601px;width:523px;height:100px"></div>
<div class="abs plab" style="left:73px;top:616px">Tests</div>
</div>
<div class="abs" style="left:24px;top:31px;width:75px;height:24px;border-radius:12px;background:#e3fbf6;color:#1a9c74;font-size:13px;line-height:24px;padding-left:13px">Effective</div>
<div class="abs btnb" style="left:326px;top:24px;width:91px;height:36px">Add task</div>
<div class="abs btnb" style="left:425px;top:24px;width:98px;height:36px">Add issue</div>
<svg class="abs" style="left:541px;top:39px" width="16" height="6" viewBox="0 0 16 6"><circle cx="2.5" cy="3" r="1.3" fill="#333"/><circle cx="8" cy="3" r="1.3" fill="#333"/><circle cx="13.5" cy="3" r="1.3" fill="#333"/></svg>
<svg class="abs" style="left:586px;top:35px" width="14" height="14" viewBox="0 0 14 14"><path d="M1.5 1.5l11 11M12.5 1.5l-11 11" stroke="#333" stroke-width="1.3"/></svg>
<div class="abs" style="left:38.5px;top:84px;font-size:12.5px;line-height:18px;color:#555;white-space:nowrap">Control A.01 <span style="color:#aaa">#518</span></div>
<div class="abs" style="left:42.5px;top:107px;font-size:20px;font-weight:bold;letter-spacing:.17px;line-height:26px;color:#3a3a3a;white-space:nowrap">Context of the organisation documented</div>
<div class="abs" style="left:0px;top:204px;width:635px;height:1px;background:#e8e8e8"></div>
<div class="abs" style="left:40.5px;top:174px;font-size:13px;font-weight:bold;line-height:18px;color:#1a73e8">Details</div>
<div class="abs" style="left:112.5px;top:174px;font-size:13px;letter-spacing:.2px;line-height:18px;color:#999">Feed</div>
<div class="abs" style="left:24px;top:202px;width:72px;height:3px;background:#0a73e8"></div>
</div>
<svg class="abs" style="left:1770px;top:1024px" width="19" height="16" viewBox="0 0 19 16"><path d="M18 4.2L5.5 16.5M18 8.9L9.3 17M18 12.5L13.3 17" stroke="#8a8a8a" stroke-width="1.4"/></svg>

</body></html>
